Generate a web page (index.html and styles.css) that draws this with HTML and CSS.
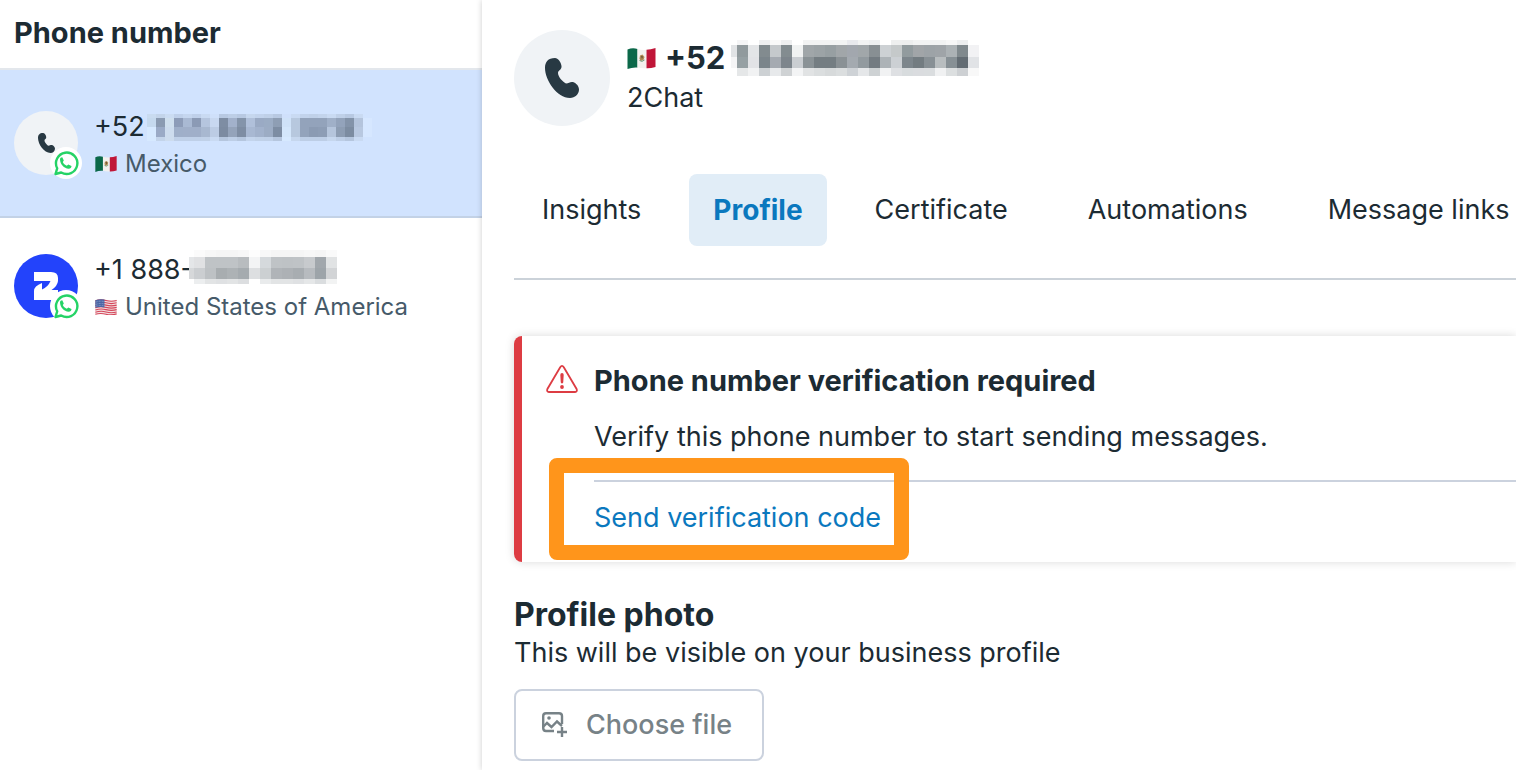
FILE: index.html
```html
<!doctype html>
<html lang="en">
<head>
    <meta charset="utf-8">
    <title>Phone number</title>
    <meta name="viewport" content="width=device-width, initial-scale=1" />
    <link rel="stylesheet" href="styles.css">
    <script src="mosaic.js" defer></script>
</head>
<body>
<svg class="defs" aria-hidden="true">
    <symbol id="phone" viewBox="0 0 34 40">
        <path d="M0 10C0 4 3 0 10 0C13 0 16 4 16.500 8C17 12 13 12 13 15C13 19 18 24 21 25.500C24 25 25 23.500 28 24C31 25 34 28 34 31.500C34 36 30 40 25 40C12 40 0 22 0 10Z" fill="#283943"/>
    </symbol>
    <symbol id="whatsapp" viewBox="0 0 32 32">
        <circle cx="16" cy="16" r="16" fill="#fff"/>
        <path d="M5.500 27L7.200 21.300A10.700 10.700 0 1 1 11.200 25.500Z" fill="none" stroke="#25d366" stroke-width="2.400" stroke-linejoin="round"/>
        <path d="M10 12.500C10 11 11.300 10.200 12.400 10.400L13.800 13.400L12.800 15C13.500 16.700 15 18 16.800 18.800L18.300 17.400L21.500 19C21.600 20.600 20.200 21.800 18.600 21.700C14 21.300 10.200 17.500 10 12.500Z" fill="#25d366"/>
    </symbol>
    <symbol id="mexico" viewBox="0 0 28 21">
        <path d="M0 1.500Q5 -.5 10 1V19.500Q5 19 0 21Z" fill="#0b6849"/>
        <path d="M10 1Q14 2.200 19 1.800V20.300Q14 20.500 10 19.500Z" fill="#f3f1ee"/>
        <path d="M19 1.800Q23 1.500 28 0V19Q23 20.500 19 20.300Z" fill="#c01638"/>
        <path d="M12.500 7.500L15 6.500L17 9L16 12L13 13L12 10.500Z" fill="#b18a55"/>
        <path d="M13.500 8L15.500 8.500L14.500 11Z" fill="#604a30"/>
        <path d="M12 12.500Q14.500 14.500 17 12" fill="none" stroke="#6f9f80"/>
    </symbol>
    <symbol id="usa" viewBox="0 0 28 21">
        <path d="M0 1.500Q7 -1 14 1T28 1V19.500Q21 21.500 14 19.700T0 20.500Z" fill="#f2dfe0"/>
        <path d="M0 2.500Q7 0 14 2T28 2M0 5.500Q7 3 14 5T28 5M0 8.500Q7 6 14 8T28 8M0 11.500Q7 9 14 11T28 11M0 14.500Q7 12 14 14T28 14M0 17.500Q7 15 14 17T28 17M0 20Q7 18 14 20T28 19.500" fill="none" stroke="#d5465a" stroke-width="1.500"/>
        <path d="M0 1.500Q6 -.5 12 .8V11Q6 9.800 0 11.500Z" fill="#4a65a5"/>
        <path d="M1 4Q6 2 12 3.500M1 7Q6 5 12 6.500M1 9.500Q6 8 12 9" fill="none" stroke="#a9b7d8" stroke-dasharray="1 1"/>
    </symbol>
</svg>

<div class="app">
    <aside class="sidebar">
        <h2 class="sidebar-title">Phone number</h2>
        <ul class="numbers">
            <li>
                <a href="#mexico-number" class="number selected" aria-current="true">
                    <span class="avatar">
                        <svg class="avatar-phone"><use href="#phone"/></svg>
                        <svg class="badge"><use href="#whatsapp"/></svg>
                    </span>
                    <span class="number-info">
                        <span class="digits">+52<svg class="mosaic small" data-mosaic="list"></svg></span>
                        <span class="country"><svg class="flag"><use href="#mexico"/></svg>Mexico</span>
                    </span>
                </a>
            </li>
            <li>
                <a href="#us-number" class="number">
                    <span class="avatar brand">
                        <svg class="avatar-logo" viewBox="0 0 24 28">
                            <path d="M0 0H17Q24 0 24 6V9Q23.500 14 17.500 18H24V28H0V19Q0 14 8 11V17.500Q14 15 16.500 9H0Z" fill="#fff"/>
                        </svg>
                        <svg class="badge"><use href="#whatsapp"/></svg>
                    </span>
                    <span class="number-info">
                        <span class="digits">+1 888-<svg class="mosaic medium" data-mosaic="us"></svg></span>
                        <span class="country"><svg class="flag"><use href="#usa"/></svg>United States of America</span>
                    </span>
                </a>
            </li>
        </ul>
    </aside>

    <main class="content">
        <header class="account">
            <span class="avatar large"><svg class="avatar-phone"><use href="#phone"/></svg></span>
            <div>
                <h1 class="account-number"><svg class="flag"><use href="#mexico"/></svg>+52<svg class="mosaic big" data-mosaic="header"></svg></h1>
                <p class="account-name">2Chat</p>
            </div>
        </header>

        <nav class="tabs">
            <a href="#insights">Insights</a>
            <a href="#profile" class="active" aria-current="page">Profile</a>
            <a href="#certificate">Certificate</a>
            <a href="#automations">Automations</a>
            <a href="#links">Message links</a>
        </nav>

        <section class="notice">
            <svg class="warning" viewBox="0 0 32 28">
                <path d="M14.200 2.200Q16 -.4 17.800 2.200L30.600 24Q31.600 26.700 29 27H3Q.4 26.700 1.400 24Z" fill="none" stroke="#dd3c43" stroke-width="1.800"/>
                <path d="M14.300 10Q14.300 8 16 8T17.700 10L17.200 17.500Q16 19.500 14.800 17.500Z" fill="#dd3c43"/>
                <circle cx="16" cy="22" r="1.900" fill="#dd3c43"/>
            </svg>
            <div class="notice-body">
                <h3>Phone number verification required</h3>
                <p>Verify this phone number to start sending messages.</p>
                <div class="notice-action">
                    <a href="#verify">Send verification code</a>
                    <div class="highlight"></div>
                </div>
            </div>
        </section>

        <section class="photo">
            <h2>Profile photo</h2>
            <p>This will be visible on your business profile</p>
            <button type="button" class="choose">
                <svg viewBox="0 0 26 26" fill="none" stroke="#778287" stroke-width="2.400">
                    <path d="M12 19H4Q1.200 19 1.200 16V4Q1.200 1.200 4 1.200H17Q20 1.200 20 4V12"/>
                    <path d="M1 15L5 11L9.500 15L15 9.500L20 14"/>
                    <circle cx="7" cy="6" r="1.800" fill="#778287" stroke="none"/>
                    <path d="M20 15V25M15 20H25"/>
                </svg>
                Choose file
            </button>
        </section>
    </main>
</div>
</body>
</html>
```

FILE: styles.css
```css
* { box-sizing: border-box; }

body {
    margin: 0;
    font: 27px/36px Inter, Helvetica, Arial, sans-serif;
    color: #1c2b33;
    background: #fff;
}

h1, h2, h3, p, ul {
    margin: 0;
    padding: 0;
}

a {
    color: inherit;
    text-decoration: none;
}

svg {
    flex: none;
}

.defs {
    position: absolute;
    width: 0;
    height: 0;
}

.app {
    display: flex;
    min-height: 100vh;
    overflow: hidden;
}

/* sidebar */
.sidebar {
    flex: none;
    width: 482px;
}

.sidebar-title {
    padding: 15px 14px 17px;
    border-bottom: 2px solid #e3e7ec;
    font-size: 29px;
    line-height: 36px;
    font-weight: 700;
}

.numbers {
    list-style: none;
}

.number {
    display: flex;
    gap: 16px;
    padding: 34px 14px 35px;
}

.number.selected {
    padding-top: 39px;
    background: #d1e3fe;
    border-bottom: 2px solid #c3d2e6;
}

.avatar {
    position: relative;
    display: flex;
    flex: none;
    align-items: center;
    justify-content: center;
    width: 64px;
    height: 64px;
    margin-top: 2px;
    border-radius: 50%;
    background: #f0f3f6;
}

.avatar.brand {
    background: #2343fb;
}

.avatar-phone {
    width: 17px;
    height: 20px;
}

.avatar-logo {
    width: 24px;
    height: 28px;
}

.badge {
    position: absolute;
    right: -4px;
    bottom: -4px;
    width: 32px;
    height: 32px;
}

.digits, .country {
    display: flex;
    align-items: center;
    height: 36px;
    white-space: nowrap;
}

.country {
    gap: 8px;
    height: 38px;
    margin-bottom: -2px;
    padding-left: 1px;
    color: #465a69;
    font-size: 24px;
}

.flag {
    width: 22px;
    height: 16px;
}

.mosaic.small {
    width: 229px;
    height: 27px;
    margin-left: -2px;
}

.mosaic.medium {
    width: 149px;
    height: 34px;
    margin: 0 0 6px -4px;
}

.mosaic.big {
    width: 249px;
    height: 36px;
    margin-left: 6px;
}

/* main panel */
.content {
    flex: 1;
    min-width: 0;
    padding: 28px 0 8px 32px;
    box-shadow: 0 0 6px rgba(0, 0, 0, .2);
}

.account {
    display: flex;
    gap: 17px;
}

.avatar.large {
    width: 96px;
    height: 96px;
}

.large .avatar-phone {
    width: 34px;
    height: 40px;
}

.account-number {
    display: flex;
    align-items: center;
    height: 44px;
    margin-top: 8px;
    font-size: 31px;
    font-weight: 700;
}

.account-number .flag {
    width: 29px;
    height: 21px;
    margin-right: 9px;
}

.tabs {
    display: flex;
    gap: 32px;
    margin-top: 48px;
    padding: 0 0 32px 4px;
    border-bottom: 2px solid #cbd2d9;
    white-space: nowrap;
}

.tabs a {
    padding: 18px 24px;
    border-radius: 8px;
}

.tabs a:first-child {
    padding-left: 24px;
}

.tabs .active {
    margin: 0 -8px;
    background: #e1edf7;
    color: #0a78be;
    font-size: 28px;
    font-weight: 700;
}

.notice {
    display: flex;
    gap: 16px;
    margin-top: 56px;
    padding: 27px 0 26px 24px;
    border-left: 8px solid #dd3c43;
    border-radius: 8px 0 0 8px;
    box-shadow: 0 0 10px rgba(0, 0, 0, .15);
}

.warning {
    width: 32px;
    height: 28px;
    margin-top: 2px;
}

.notice-body {
    flex: 1;
}

.notice h3 {
    font-size: 29px;
    font-weight: 700;
}

.notice p {
    margin-top: 20px;
}

.notice-action {
    position: relative;
    margin-top: 25px;
    padding-top: 18px;
    border-top: 2px solid #cbd2de;
    color: #0a78be;
}

.highlight {
    position: absolute;
    top: -24px;
    left: -45px;
    width: 360px;
    height: 102px;
    border: 15px solid #ff951b;
    border-radius: 8px;
    pointer-events: none;
}

.photo {
    margin-top: 33px;
}

.photo h2 {
    font-size: 32px;
    line-height: 40px;
    font-weight: 700;
}

.choose {
    display: flex;
    align-items: center;
    gap: 18px;
    height: 72px;
    margin-top: 18px;
    padding: 0 30px 0 26px;
    border: 2px solid #cbd2de;
    border-radius: 8px;
    background: #fff;
    color: #778287;
    font: 500 27px/36px Inter, Helvetica, Arial, sans-serif;
}

.choose svg {
    width: 26px;
    height: 26px;
}
```

FILE: mosaic.js
```javascript
// masked digits: column edges, row edges and one list of colours per row
var mosaics = {
    list: {
        start: 4, cell: 9, rows: [0, 4, 13, 23, 27],
        colors: [
            'c9dbf0 c3d4ea cbdcf2 bfd0ea c5d6ef bfd0ea c9daf2 cfe0fa b8c9e2 bdcee6 b8c9e2 c6d7ee c2d3ec bfd0e8 b8c9e2 cfe0fb c9daf2 c2d3ec c0d1e9 c3d4ec c9daf2 bfd0e8 b8c9e2 c9daf2 d1e3fe',
            'c5d9ee 8b9bb2 cfdfee 8d9cb8 a9b9d3 8b9ab5 b5c5de c8d8f0 7e8da3 a2b1cb 8494aa b0c0da 9aaac4 9bacc4 8e9eb4 cfe2f8 b7c8de 93a3bb 93a3bb 93a3bb a0b0c8 93a3bb 8393a9 b4c4dc d6e7ff',
            'd6e9ff 9aaac6 cddcee 9fafc9 a0afc9 a0afc9 a8b8d0 bccce4 7c8ba1 94a3ba 7e8da3 a8b8d2 a2b2cc 9cacc4 7d8da3 d3e6fb b7c8de 93a3bb 8b9bb3 8d9db5 b5c5dc 8d9db3 7c8ca1 b8c8e0 d6e7ff',
            'd6e9ff c3d4ea cddcee bfd0e8 bfd0e8 bfd0e8 c0d1e8 c9daf2 b5c6de bdcee6 b5c6de c3d4ec c0d1e8 bfd0e8 b5c6de d6e9ff c6d7ee bdcee6 bdcee6 bdcee6 c6d7ee bdcee6 b5c6de c9daf2 d1e3fe'
        ]
    },
    us: {
        start: -6, cell: 11, rows: [0, 7, 18, 29, 34],
        colors: [
            'ffffff fbfbfb f7f7f7 f5f5f5 f5f5f5 f7f7f7 fdfdfd f8f8f8 f5f5f5 f5f5f5 f5f5f5 f7f7f7 f5f5f5 fafafa',
            'e4e6e8 e0e1e3 bfc3c6 bfc3c6 bfc3c6 b8bcbf f3f4f5 d5d9dc bfc3c6 bec2c5 bfc3c6 c7cacd a1a7ac e1e3e4',
            'd6d8da cbced1 bdc1c4 a8adb0 adb2b5 a5abaf dddfe1 ccd0d2 b0b4b8 adb1b5 a8adb1 b7bbbf 9da4a9 d2d4d6',
            'ffffff eceeef e2e4e5 dfe1e3 e2e4e5 dcdee0 ffffff e9ebec e2e4e5 e2e4e5 dfe1e3 e5e7e8 dadddf f2f3f3'
        ]
    },
    header: {
        start: -5, cell: 11, rows: [0, 5, 17, 28, 36],
        colors: [
            'ffffff f5f5f6 ffffff eeeff0 f9f9f9 eeeff0 ffffff f2f3f3 f2f3f3 f2f3f3 f2f3f3 e8e9ed f2f3f3 edeff0 ffffff eeefef edeeee f2f3f3 f2f3f3 f2f3f3 f7f7f7 edeeef ffffff',
            'e1e3e5 919a9d e3e5e7 828b8f c5c9cc 838c90 f0f2f2 a0a6a9 9ca3a6 979fa2 a1a6a9 a2a7ae a1a7aa 888f93 cdd1d4 c5c9ca 929b9e a1a5a8 9da3a7 9fa4a8 acb2b5 80898d f2f2f4',
            'f5f5f6 96a0a3 e2e3e6 7b858b a5aab1 7d858c caced2 8a9296 747d82 747d82 8a9195 a4aab0 929a9f 737b81 adb3b7 ccd0d4 7d868c 737c81 889095 b8bdbf 879095 636c73 e1e3e6',
            'ffffff e5e7e8 f1f2f3 cdd1d4 e7e9eb cfd2d4 f3f4f5 e1e3e4 dbdedf d7dadb dbdedf ced2d6 e5e7e9 ced2d4 f1f2f3 dee0e3 d8dcde dadcdf dadddf f0f1f2 dcdfe0 cdd0d3 f8f8f8'
        ]
    }
};

document.querySelectorAll('[data-mosaic]').forEach(function (svg) {
    var m = mosaics[svg.dataset.mosaic];
    m.colors.forEach(function (row, r) {
        row.split(' ').forEach(function (color, c) {
            var rect = document.createElementNS('http://www.w3.org/2000/svg', 'rect');
            rect.setAttribute('x', m.start + c * m.cell);
            rect.setAttribute('y', m.rows[r]);
            rect.setAttribute('width', m.cell);
            rect.setAttribute('height', m.rows[r + 1] - m.rows[r]);
            rect.setAttribute('fill', '#' + color);
            svg.appendChild(rect);
        });
    });
});
```
